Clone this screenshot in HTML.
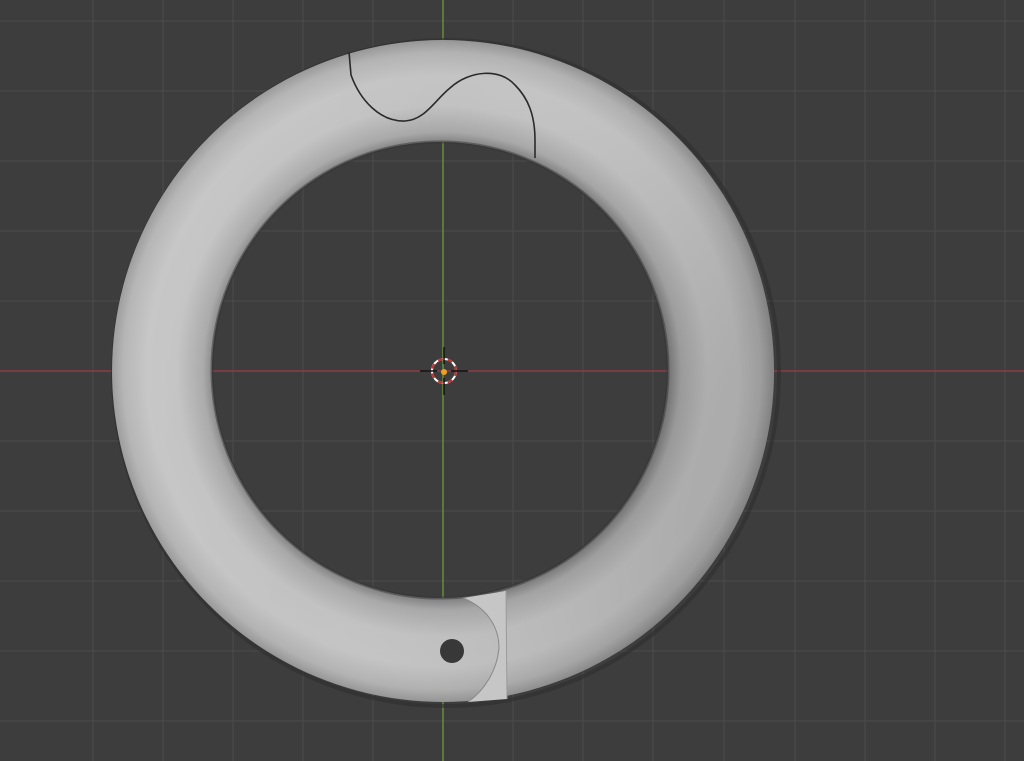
<!DOCTYPE html>
<html><head><style>html,body{margin:0;padding:0;background:#3d3d3d;width:1024px;height:761px;overflow:hidden}</style></head>
<body>
<svg width="1024" height="761" viewBox="0 0 1024 761" xmlns="http://www.w3.org/2000/svg">
<defs>
<radialGradient id="tube" gradientUnits="userSpaceOnUse" cx="442" cy="371" r="332">
<stop offset="0.685" stop-color="#7e7e7e"/>
<stop offset="0.72" stop-color="#a8a8a8"/>
<stop offset="0.80" stop-color="#c2c2c2"/>
<stop offset="0.89" stop-color="#c4c4c4"/>
<stop offset="0.96" stop-color="#b2b2b2"/>
<stop offset="1" stop-color="#939393"/>
</radialGradient>
<linearGradient id="side" x1="0" y1="0" x2="1" y2="0.3">
<stop offset="0" stop-color="#ffffff" stop-opacity="0.08"/>
<stop offset="0.5" stop-color="#ffffff" stop-opacity="0"/>
<stop offset="1" stop-color="#000000" stop-opacity="0.12"/>
</linearGradient>
</defs>
<g stroke="#4a4a4a" stroke-width="1.2">
<line x1="93" y1="0" x2="93" y2="761"/><line x1="163" y1="0" x2="163" y2="761"/><line x1="233" y1="0" x2="233" y2="761"/><line x1="303" y1="0" x2="303" y2="761"/><line x1="373" y1="0" x2="373" y2="761"/><line x1="513" y1="0" x2="513" y2="761"/><line x1="583" y1="0" x2="583" y2="761"/><line x1="653" y1="0" x2="653" y2="761"/><line x1="724" y1="0" x2="724" y2="761"/><line x1="795" y1="0" x2="795" y2="761"/><line x1="865" y1="0" x2="865" y2="761"/><line x1="935" y1="0" x2="935" y2="761"/><line x1="1005" y1="0" x2="1005" y2="761"/>
<line x1="0" y1="21" x2="1024" y2="21"/><line x1="0" y1="91" x2="1024" y2="91"/><line x1="0" y1="161" x2="1024" y2="161"/><line x1="0" y1="231" x2="1024" y2="231"/><line x1="0" y1="301" x2="1024" y2="301"/><line x1="0" y1="441" x2="1024" y2="441"/><line x1="0" y1="511" x2="1024" y2="511"/><line x1="0" y1="581" x2="1024" y2="581"/><line x1="0" y1="651" x2="1024" y2="651"/><line x1="0" y1="721" x2="1024" y2="721"/>
</g>
<line x1="0" y1="371" x2="1024" y2="371" stroke="#9a3c48" stroke-width="1.3"/>
<line x1="443" y1="0" x2="443" y2="761" stroke="#6a9a3a" stroke-width="1.3"/>
<circle cx="446" cy="373" r="333" fill="none" stroke="#2e2e2e" stroke-width="4" opacity="0.6"/>
<path fill-rule="evenodd" fill="url(#tube)" d="M443,40 a331,331 0 1,0 0.1,0 Z M440,142 a228,228 0 1,1 -0.1,0 Z"/>
<path fill-rule="evenodd" fill="url(#side)" d="M443,40 a331,331 0 1,0 0.1,0 Z M440,142 a228,228 0 1,1 -0.1,0 Z"/>
<circle cx="440" cy="370" r="228" fill="none" stroke="#333" stroke-width="3" opacity="0.5"/>
<path d="M349,52 L351,75 C360,100 380,122 405,121 C425,120 435,100 450,88 C470,70 500,68 515,85 C528,98 535,115 535,140 L535,158" fill="none" stroke="#2a2a2a" stroke-width="1.6"/>
<path d="M463,598 L506,591 L507,699 L468,702 C485,690 497,670 499,648 C499,625 485,607 463,598 Z" fill="#c6c6c6"/>
<path d="M463,598 C485,607 499,625 499,648 C497,670 485,690 468,702" fill="none" stroke="#8a8a8a" stroke-width="1"/>
<line x1="506" y1="592" x2="507" y2="699" stroke="#9a9a9a" stroke-width="1"/>
<circle cx="452" cy="651" r="12" fill="#383838"/>
<circle cx="444" cy="371" r="12" fill="none" stroke="#ffffff" stroke-width="2"/>
<circle cx="444" cy="371" r="12" fill="none" stroke="#c83030" stroke-width="2" stroke-dasharray="5,5"/>
<g stroke="#111" stroke-width="1.5"><line x1="420" y1="371" x2="437" y2="371"/><line x1="451" y1="371" x2="468" y2="371"/><line x1="444" y1="347" x2="444" y2="364"/><line x1="444" y1="378" x2="444" y2="395"/></g>
<circle cx="444" cy="372" r="3" fill="#f0a020"/>
</svg>
</body></html>
